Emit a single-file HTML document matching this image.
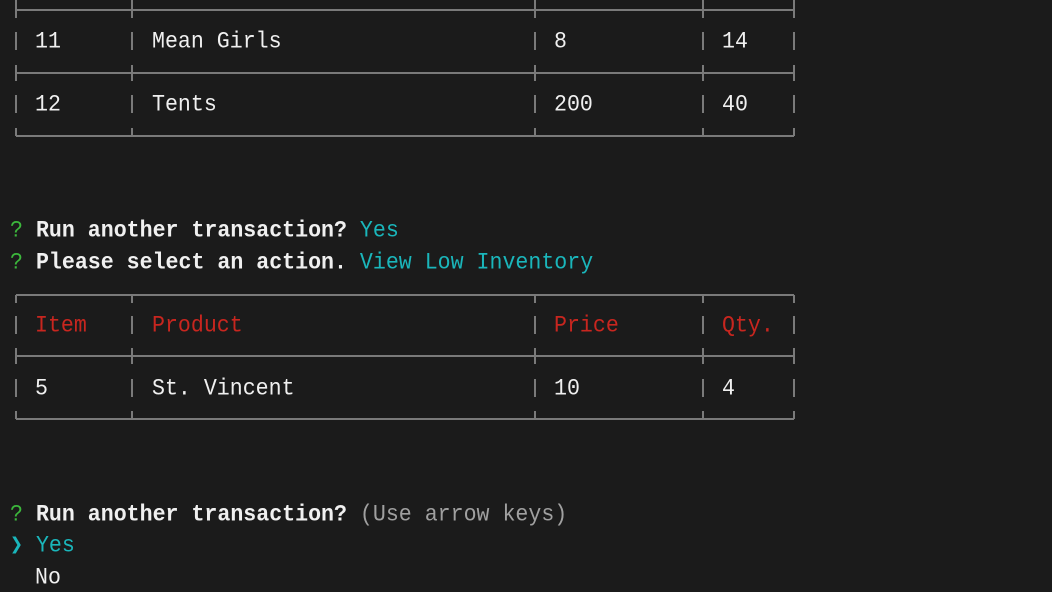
<!DOCTYPE html>
<html><head><meta charset="utf-8"><style>
html,body{margin:0;padding:0;background:#1b1b1b;width:1052px;height:592px;overflow:hidden;position:relative}
.t{position:absolute;white-space:pre;font-family:"Liberation Mono","DejaVu Sans Mono",monospace;font-size:21.6px;line-height:32px;height:32px;color:#f0f0f0;transform:scaleY(1.08);transform-origin:0 50%}
.b{font-weight:bold}
.g{color:#3cb83c}.c{color:#1ab6bb}.r{color:#c8261f}.d{color:#a0a0a0}
</style></head><body>
<svg width="1052" height="592" style="position:absolute;left:0;top:0" stroke="#7a7a7a" stroke-width="2" fill="none">
<path d="M16 10H794M16 73H794M16 136H794"/>
<path d="M16 0V18M132 0V18M535 0V18M703 0V18M794 0V18"/>
<path d="M16 65V81M132 65V81M535 65V81M703 65V81M794 65V81"/>
<path d="M16 128V136M132 128V136M535 128V136M703 128V136M794 128V136"/>
<path d="M16 32V50M132 32V50M535 32V50M703 32V50M794 32V50"/>
<path d="M16 95V113M132 95V113M535 95V113M703 95V113M794 95V113"/>
<path d="M16 295H794M16 356H794M16 419H794"/>
<path d="M16 295V303M132 295V303M535 295V303M703 295V303M794 295V303"/>
<path d="M16 348V364M132 348V364M535 348V364M703 348V364M794 348V364"/>
<path d="M16 411V419M132 411V419M535 411V419M703 411V419M794 411V419"/>
<path d="M16 316V334M132 316V334M535 316V334M703 316V334M794 316V334"/>
<path d="M16 379V397M132 379V397M535 379V397M703 379V397M794 379V397"/>
</svg>
<div class="t" style="left:35px;top:26px">11</div>
<div class="t" style="left:152px;top:26px">Mean Girls</div>
<div class="t" style="left:554px;top:26px">8</div>
<div class="t" style="left:722px;top:26px">14</div>
<div class="t" style="left:35px;top:89px">12</div>
<div class="t" style="left:152px;top:89px">Tents</div>
<div class="t" style="left:554px;top:89px">200</div>
<div class="t" style="left:722px;top:89px">40</div>

<div class="t" style="left:10px;top:215px"><span class="g">?</span> <span class="b">Run another transaction?</span> <span class="c">Yes</span></div>
<div class="t" style="left:10px;top:247px"><span class="g">?</span> <span class="b">Please select an action.</span> <span class="c">View Low Inventory</span></div>

<div class="t r" style="left:35px;top:310px">Item</div>
<div class="t r" style="left:152px;top:310px">Product</div>
<div class="t r" style="left:554px;top:310px">Price</div>
<div class="t r" style="left:722px;top:310px">Qty.</div>
<div class="t" style="left:35px;top:373px">5</div>
<div class="t" style="left:152px;top:373px">St. Vincent</div>
<div class="t" style="left:554px;top:373px">10</div>
<div class="t" style="left:722px;top:373px">4</div>

<div class="t" style="left:10px;top:499px"><span class="g">?</span> <span class="b">Run another transaction?</span> <span class="d">(Use arrow keys)</span></div>
<div class="t c" style="left:10px;top:530px"><span class="b">❯</span> Yes</div>
<div class="t" style="left:35px;top:562px">No</div>
</body></html>
